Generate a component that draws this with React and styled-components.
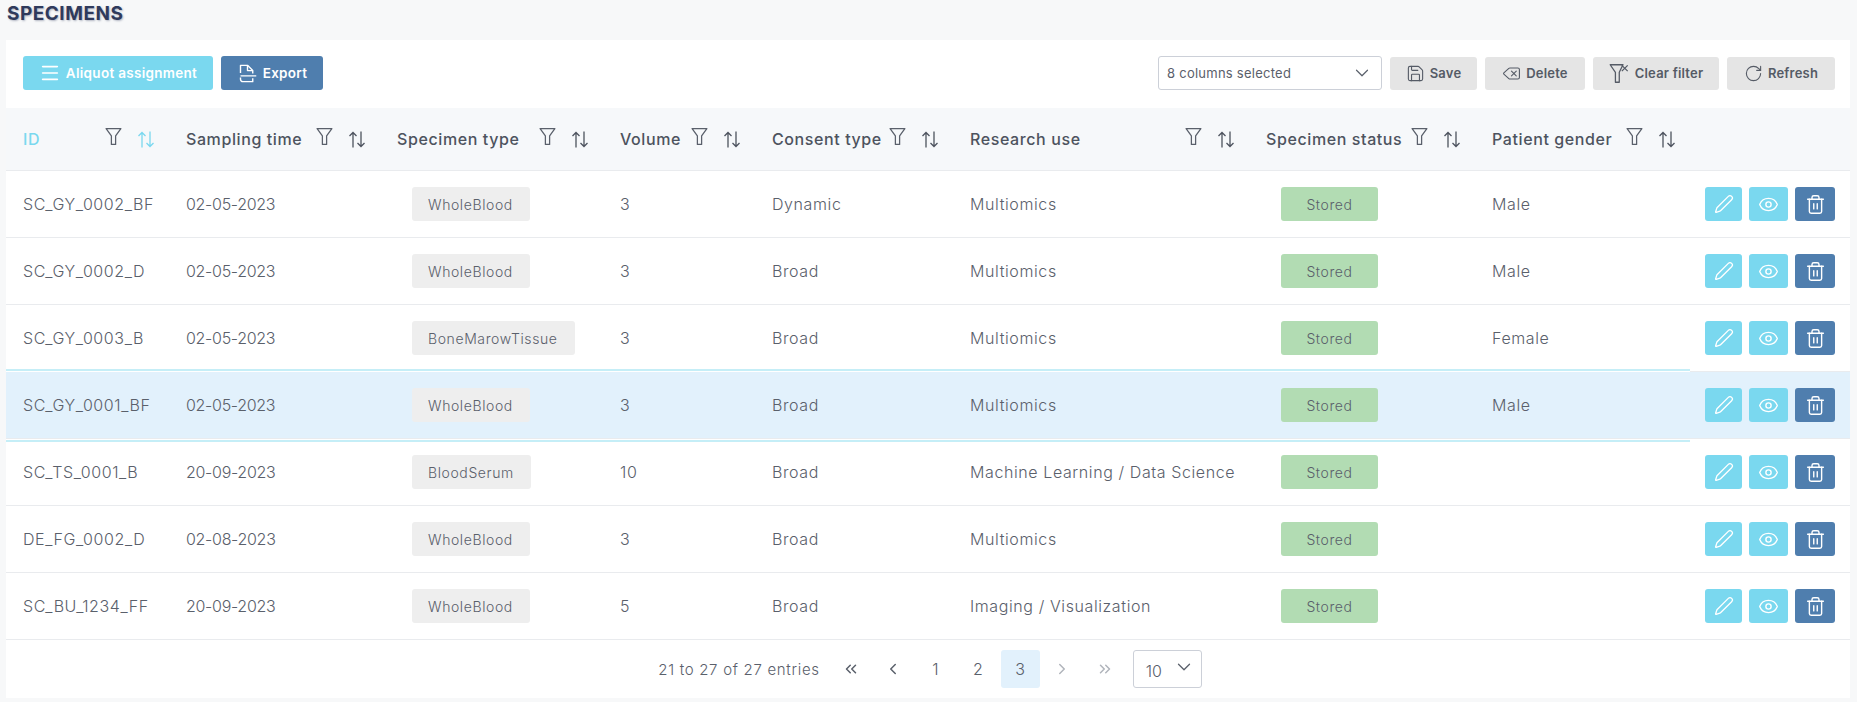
import React from 'react'
import styled, { createGlobalStyle } from 'styled-components'
import { Menu, Save, Delete, RotateCw, Pen, Eye, Trash2, ChevronDown, ChevronLeft, ChevronRight, ChevronsLeft, ChevronsRight } from 'lucide-react'

const COLUMNS = [
	{ label: 'ID', width: 163, active: true },
	{ label: 'Sampling time', width: 211 },
	{ label: 'Specimen type', width: 223 },
	{ label: 'Volume', width: 152 },
	{ label: 'Consent type', width: 198 },
	{ label: 'Research use', width: 296 },
	{ label: 'Specimen status', width: 226 },
	{ label: 'Patient gender', width: 215 },
]

const ROWS = [
	['SC_GY_0002_BF', '02-05-2023', 'WholeBlood', '3', 'Dynamic', 'Multiomics', 'Male'],
	['SC_GY_0002_D', '02-05-2023', 'WholeBlood', '3', 'Broad', 'Multiomics', 'Male'],
	['SC_GY_0003_B', '02-05-2023', 'BoneMarowTissue', '3', 'Broad', 'Multiomics', 'Female'],
	['SC_GY_0001_BF', '02-05-2023', 'WholeBlood', '3', 'Broad', 'Multiomics', 'Male'],
	['SC_TS_0001_B', '20-09-2023', 'BloodSerum', '10', 'Broad', 'Machine Learning / Data Science', ''],
	['DE_FG_0002_D', '02-08-2023', 'WholeBlood', '3', 'Broad', 'Multiomics', ''],
	['SC_BU_1234_FF', '20-09-2023', 'WholeBlood', '5', 'Broad', 'Imaging / Visualization', ''],
]

const FilterIcon = () => (
	<svg width="17" height="19" viewBox="0 0 16 18" fill="none" stroke="#5a606b" strokeWidth="1.2" strokeLinejoin="round">
		<path d="M1 1.500h14L10 8.500v8H6v-8z" />
	</svg>
)

const SortIcon = () => (
	<svg width="18" height="19" viewBox="0 0 18 18" fill="none" stroke="currentColor" strokeWidth="1.3">
		<path d="M5 17V2M1.500 5.500L5 2l3.500 3.500" />
		<path d="M13 1v15M9.500 12.500L13 16l3.500-3.500" />
	</svg>
)

const ExportIcon = () => (
	<svg width="21" height="21" viewBox="0 0 18 18" fill="none" stroke="#fff" strokeWidth="1.2" strokeLinejoin="round">
		<path d="M3 8.500V2h6l4.500 4.500v2.500M13.500 13v3H5a2 2 0 0 1-2-2v-1.500" />
		<path d="M9 2v4.500h4.500M3 11h13.500" />
	</svg>
)

const ClearFilterIcon = () => (
	<svg width="21" height="21" viewBox="0 0 18 18" fill="none" stroke="#555b66" strokeWidth="1.1" strokeLinejoin="round">
		<path d="M1 1.500h11L8.800 8v8.500H5.500V8z" />
		<path d="M11 2l5 5M16 2l-5 5" />
	</svg>
)

const App = () => (
	<Page>
		<GlobalStyle />
		<Title>SPECIMENS</Title>
		<Panel>
			<Toolbar>
				<ToolGroup>
					<PrimaryButton tone="#7ad8ef" width={190}><Menu size={22} strokeWidth={1.8} />Aliquot assignment</PrimaryButton>
					<PrimaryButton tone="#4f7eae" width={102}><ExportIcon />Export</PrimaryButton>
				</ToolGroup>
				<ToolGroup>
					<ColumnSelect>8 columns selected<ChevronDown size={22} strokeWidth={1.3} /></ColumnSelect>
					<GreyButton width={87}><Save size={19} strokeWidth={1.4} />Save</GreyButton>
					<GreyButton width={100}><Delete size={19} strokeWidth={1.4} />Delete</GreyButton>
					<GreyButton width={126}><ClearFilterIcon />Clear filter</GreyButton>
					<GreyButton width={108}><RotateCw size={19} strokeWidth={1.4} />Refresh</GreyButton>
				</ToolGroup>
			</Toolbar>
			<Table>
				<colgroup>
					{ COLUMNS.map(c => <col key={ c.label } width={ c.width } />) }
					<col />
				</colgroup>
				<thead>
					<tr>
						{ COLUMNS.map(c => (
							<HeadCell key={ c.label }>
								<HeadInner $active={ c.active }>
									<span>{ c.label }</span>
									<HeadIcons>
										<FilterNudge><FilterIcon /></FilterNudge>
										<SortIcon />
									</HeadIcons>
								</HeadInner>
							</HeadCell>
						)) }
						<HeadCell />
					</tr>
				</thead>
				<tbody>
					{ ROWS.map(([id, time, type, volume, consent, use, gender]) => {
						const selected = id === 'SC_GY_0001_BF'
						return (
							<Row key={ id } $selected={ selected }>
								<Cell $selected={ selected }>{ id }</Cell>
								<DateCell $selected={ selected }>{ time }</DateCell>
								<Cell $selected={ selected }><Chip>{ type }</Chip></Cell>
								<Cell $selected={ selected }>{ volume }</Cell>
								<Cell $selected={ selected }>{ consent }</Cell>
								<Cell $selected={ selected }>{ use }</Cell>
								<Cell $selected={ selected }><StatusChip>Stored</StatusChip></Cell>
								<Cell $selected={ selected }>{ gender }</Cell>
								<ActionCell>
									<Actions>
										<ActionButton tone="#7ad8ef" width={37}><Pen size={20} strokeWidth={1.6} /></ActionButton>
										<ActionButton tone="#7ad8ef" width={39}><Eye size={21} strokeWidth={1.6} /></ActionButton>
										<ActionButton tone="#4f7eae" width={40}><Trash2 size={21} strokeWidth={1.6} /></ActionButton>
									</Actions>
								</ActionCell>
							</Row>
						)
					}) }
				</tbody>
			</Table>
			<Footer>
				<Entries>21 to 27 of 27 entries</Entries>
				<Pages>
					<PageButton><ChevronsLeft size={18} /></PageButton>
					<PageButton><ChevronLeft size={18} /></PageButton>
					<PageButton>1</PageButton>
					<PageButton>2</PageButton>
					<PageButton $current>3</PageButton>
					<PageButton $disabled><ChevronRight size={18} /></PageButton>
					<PageButton $disabled><ChevronsRight size={18} /></PageButton>
				</Pages>
				<PageSize>10<ChevronDown size={22} strokeWidth={1.4} /></PageSize>
			</Footer>
		</Panel>
	</Page>
)

const GlobalStyle = createGlobalStyle`
	html, body {
		margin: 0;
		background: #f7f8f9;
	}
	* {
		box-sizing: border-box;
	}
`

const Page = styled.div`
	padding: 0 7px 0 6px;
	font-family: Inter, "Noto Sans", sans-serif;
	color: #5a606b;
`

const Title = styled.h1`
	margin: 0;
	height: 40px;
	padding: 3px 1px 0;
	font-size: 19px;
	line-height: 22px;
	font-weight: 700;
	letter-spacing: 0.5px;
	color: #2f3a5c;
	text-shadow: 1px 1px 2px rgba(47, 58, 92, 0.35);
`

const Panel = styled.main`
	background: #fff;
`

const Toolbar = styled.div`
	display: flex;
	justify-content: space-between;
	align-items: center;
	height: 68px;
	padding: 0 15px 2px 17px;
`

const ToolGroup = styled.div`
	display: flex;
	align-items: center;
	gap: 8px;
`

const PrimaryButton = styled.button`
	display: flex;
	align-items: center;
	justify-content: center;
	gap: 5px;
	width: ${ ({ width }) => width }px;
	height: 34px;
	padding: 0;
	border: 0;
	border-radius: 3px;
	background: ${ ({ tone }) => tone };
	color: #fff;
	font: 600 13.500px Inter, sans-serif;
	letter-spacing: 0.3px;
`

const GreyButton = styled(PrimaryButton)`
	height: 33px;
	background: #e5e5e5;
	color: #555b66;
	font-size: 13px;
	letter-spacing: 0.2px;
`

const ColumnSelect = styled.div`
	display: flex;
	align-items: center;
	justify-content: space-between;
	width: 224px;
	height: 34px;
	padding: 0 8px;
	border: 1px solid #ccd0d8;
	border-radius: 3px;
	font-size: 13px;
	letter-spacing: 0.25px;
`

const Table = styled.table`
	width: 100%;
	table-layout: fixed;
	border-collapse: separate;
	border-spacing: 0;
`

const HeadCell = styled.th`
	height: 63px;
	padding: 0 14px 0 17px;
	background: #f6f8fa;
	border-bottom: 1px solid #e9ebee;
	text-align: left;
`

const HeadInner = styled.div`
	display: flex;
	align-items: center;
	justify-content: space-between;
	font-size: 16px;
	font-weight: 500;
	letter-spacing: 0.6px;
	white-space: nowrap;
	color: ${ ({ $active }) => $active ? '#7ad8ef' : '#4d535e' };
`

const HeadIcons = styled.div`
	display: flex;
	align-items: center;
	gap: 15px;
`

const FilterNudge = styled.span`
	display: flex;
	margin-top: -6px;
`

const Row = styled.tr`
	background: ${ ({ $selected }) => $selected ? '#e2f1fc' : 'transparent' };
`

const Cell = styled.td`
	height: 67px;
	padding: 0 0 0 17px;
	border-bottom: 1px solid #e9ebee;
	font-size: 16px;
	font-weight: 300;
	letter-spacing: 0.6px;
	white-space: nowrap;
	${ ({ $selected }) => $selected && 'box-shadow: 0 -1px 0 #fff, 0 -3px 0 #c5eef7, 0 1px 0 #fff, 0 3px 0 #c5eef7;' }
`

const DateCell = styled(Cell)`
	letter-spacing: -0.3px;
`

const ActionCell = styled(Cell)`
	padding: 0 15px 0 0;
`

const Actions = styled.div`
	display: flex;
	justify-content: flex-end;
	gap: 7px;
`

const ActionButton = styled.button`
	display: flex;
	align-items: center;
	justify-content: center;
	width: ${ ({ width }) => width }px;
	height: 34px;
	padding: 0;
	border: 0;
	border-radius: 3px;
	background: ${ ({ tone }) => tone };
	color: #fff;
`

const Chip = styled.span`
	display: inline-flex;
	align-items: center;
	height: 34px;
	margin-left: 15px;
	padding: 0 17px 0 16px;
	border-radius: 3px;
	background: #eeeeee;
	font-size: 14px;
	letter-spacing: 0.6px;
`

const StatusChip = styled(Chip)`
	justify-content: center;
	width: 97px;
	padding: 0;
	background: #b2dcb3;
`

const Footer = styled.div`
	display: flex;
	align-items: center;
	justify-content: center;
	height: 58px;
	padding-left: 4px;
`

const Entries = styled.span`
	margin-right: 10px;
	font-size: 15px;
	font-weight: 300;
	letter-spacing: 0.7px;
	color: #5a606b;
`

const Pages = styled.div`
	display: flex;
	align-items: center;
`

const PageButton = styled.div`
	display: flex;
	align-items: center;
	justify-content: center;
	width: 39px;
	height: 38px;
	margin: 0 1.650px;
	border-radius: 3px;
	background: ${ ({ $current }) => $current ? '#e2f1fc' : 'transparent' };
	color: ${ ({ $disabled }) => $disabled ? '#b0b4bb' : '#5a606b' };
	font-size: 16px;
	font-weight: 300;
`

const PageSize = styled.div`
	display: flex;
	align-items: center;
	justify-content: space-between;
	width: 69px;
	height: 38px;
	margin-left: 7px;
	padding: 4px 6px 0 12px;
	border: 1px solid #ccd0d8;
	border-radius: 3px;
	font-size: 16px;
	font-weight: 300;
	svg {
		margin-top: -8px;
	}
`

export default App
